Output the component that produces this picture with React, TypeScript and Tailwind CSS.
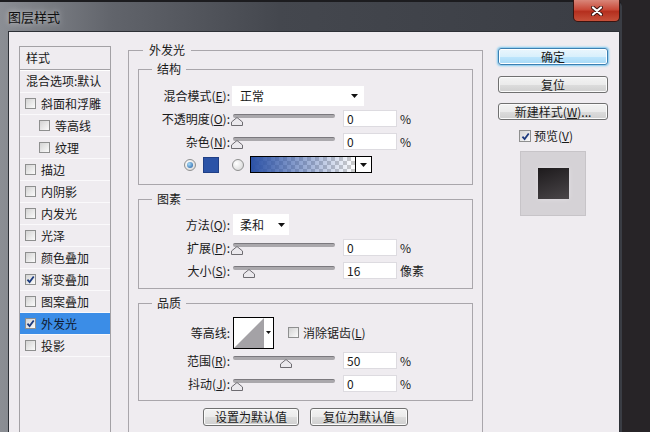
import React from "react";

function Check({ on = false, big = false }: { on?: boolean; big?: boolean }) {
  return (
    <span
      className={`${big ? "w-[12px] h-[12px]" : "w-[11px] h-[11px]"} shrink-0 border border-[#8e8f8f] bg-[linear-gradient(135deg,#d3d3d3,#fbfbfb)] flex items-center justify-center`}
    >
      {on && (
        <svg viewBox="0 0 10 10" className="w-[9px] h-[9px]">
          <path d="M1.6 5.2 L4 7.9 L8.6 1.6" fill="none" stroke="#1c3a7e" strokeWidth="2" />
        </svg>
      )}
    </span>
  );
}

function Radio({ on = false }: { on?: boolean }) {
  return (
    <span className="w-[12px] h-[12px] shrink-0 rounded-full border border-[#8e8f8f] bg-[radial-gradient(circle_at_35%_35%,#ffffff,#d2d2d2)] flex items-center justify-center">
      {on && (
        <span className="w-[6px] h-[6px] rounded-full bg-[radial-gradient(circle_at_35%_35%,#a9dcf8,#1c5aa3)]" />
      )}
    </span>
  );
}

function Arrow({ small = false }: { small?: boolean }) {
  return small ? (
    <svg width="5" height="3" viewBox="0 0 5 3">
      <path d="M0 0 H5 L2.5 3 Z" fill="#111" />
    </svg>
  ) : (
    <svg width="7" height="4" viewBox="0 0 7 4">
      <path d="M0 0 H7 L3.5 4 Z" fill="#111" />
    </svg>
  );
}

function Slider({ thumb }: { thumb: string }) {
  return (
    <div className="relative w-[102px] h-[14px] ml-[1px] shrink-0">
      <div className="mt-[2px] h-[4px] rounded-full bg-[#aaa8ac] border-t border-[#7b797e]" />
      <svg className={`absolute top-[5px] ${thumb} w-[12px] h-[9px]`} viewBox="0 0 12 9">
        <path d="M6 0.5 L11.5 5 V8.5 H0.5 V5 Z" fill="#ebe9ed" stroke="#6e6c71" />
      </svg>
    </div>
  );
}

function Field({ value }: { value: string }) {
  return (
    <div className="ml-[8px] w-[54px] h-[17px] shrink-0 bg-white border border-[#dddbe0] flex items-center pl-[3px] leading-none">
      {value}
    </div>
  );
}

function Label({ children }: { children: React.ReactNode }) {
  return <div className="w-[91px] shrink-0 text-right leading-none">{children}</div>;
}

function K({ children }: { children: React.ReactNode }) {
  return <span className="underline underline-offset-[1px]">{children}</span>;
}

function SliderRow({ label, thumb, value, unit }: { label: React.ReactNode; thumb: string; value: string; unit: string }) {
  return (
    <div className="h-[23px] flex items-center">
      <Label>{label}</Label>
      <div className="w-[2px]" />
      <Slider thumb={thumb} />
      <Field value={value} />
      <span className="ml-[3px] leading-none">{unit}</span>
    </div>
  );
}

const gray =
  "rounded-[3px] border border-[#707070] bg-[linear-gradient(#f3f3f3_0%,#ebebeb_50%,#dddddd_51%,#cfcfcf_100%)] shadow-[inset_0_0_0_1px_#fbfbfb] flex items-center justify-center leading-none";

const items = [
  { t: "斜面和浮雕" },
  { t: "等高线", indent: true },
  { t: "纹理", indent: true },
  { t: "描边" },
  { t: "内阴影" },
  { t: "内发光" },
  { t: "光泽" },
  { t: "颜色叠加" },
  { t: "渐变叠加", on: true },
  { t: "图案叠加" },
  { t: "外发光", on: true, sel: true },
  { t: "投影" },
];

export default function App() {
  return (
    <div className="w-[650px] h-[432px] overflow-hidden bg-[#272427] font-['Noto_Sans_CJK_SC','Liberation_Sans',sans-serif] text-[12px] text-[#1a1a1a]">
      <div className="w-[622px] h-full flex flex-col rounded-tr-[6px] pl-[8px] pr-[2px] bg-[linear-gradient(90deg,#8b8e94_0%,#61646b_18%,#44474e_45%,#3a3d44_100%)] border-t-[2px] border-[#1c1c1f]">
        <div className="h-[29px] flex items-start justify-between shrink-0">
          <span className="mt-[8px] text-[13px] leading-[14px] text-[#101010] [text-shadow:0_0_6px_rgba(255,255,255,0.7)]">
            图层样式
          </span>
          <div className="-mt-[2px] w-[47px] h-[22px] rounded-b-[5px] border border-t-0 border-[#3a1410] bg-[linear-gradient(#d98679_0%,#c94a39_45%,#b52f1e_55%,#c6503a_100%)] flex items-center justify-center">
            <svg width="12" height="10" viewBox="0 0 12 10">
              <path d="M2 1.5 L10 8.5 M10 1.5 L2 8.5" stroke="#3a1410" strokeWidth="4" strokeLinecap="round" />
              <path d="M2 1.5 L10 8.5 M10 1.5 L2 8.5" stroke="#ffffff" strokeWidth="2.2" strokeLinecap="round" />
            </svg>
          </div>
        </div>

        <div className="flex-1 border border-[#2d3036] bg-[#efecf0] flex items-start">
          {/* styles list */}
          <div className="ml-[10px] mt-[14px] w-[92px] self-stretch border-l border-r border-t border-[#a3a1a5]">
            <div className="h-[23px] pl-[6px] flex items-center leading-none border-b border-[#a3a1a5] shadow-[0_1px_0_#ffffff]">
              样式
            </div>
            <div className="h-[23px] pl-[6px] flex items-center leading-none border-b border-[#faf9fb]">
              混合选项:默认
            </div>
            {items.map((it) => (
              <div
                key={it.t}
                className={`h-[22px] flex items-center gap-[5px] leading-none border-b border-[#faf9fb] ${
                  it.indent ? "pl-[19px]" : "pl-[5px]"
                } ${it.sel ? "bg-[#3b8de7] text-[#0f1a30]" : ""}`}
              >
                <Check on={it.on} />
                <span>{it.t}</span>
              </div>
            ))}
          </div>

          {/* middle */}
          <fieldset className="ml-[17px] mt-[10px] w-[355px] border border-[#a9a6ab] px-[9px] pt-[3px] pb-[30px]">
            <legend className="ml-[5px] px-[6px] leading-[16px]">外发光</legend>

            <fieldset className="border border-[#a9a6ab] pt-[7px] pb-[8px]">
              <legend className="ml-[13px] px-[5px] leading-[16px]">结构</legend>
              <div className="h-[23px] flex items-center">
                <Label>
                  混合模式(<K>E</K>):
                </Label>
                <div className="w-[2px]" />
                <div className="w-[132px] h-[20px] bg-white flex items-center justify-between pl-[8px] pr-[6px] leading-none">
                  <span>正常</span>
                  <Arrow />
                </div>
              </div>
              <SliderRow
                label={<>不透明度(<K>O</K>):</>}
                thumb="left-[-2px]"
                value="0"
                unit="%"
              />
              <SliderRow label={<>杂色(<K>N</K>):</>} thumb="left-[-2px]" value="0" unit="%" />
              <div className="h-[23px] flex items-center">
                <div className="w-[91px] shrink-0 flex items-center justify-end gap-[7px] pr-[11px]">
                  <Radio on />
                  <span className="w-[16px] h-[16px] bg-[#2b53a7] border border-[#203f86]" />
                </div>
                <div className="w-[2px]" />
                <Radio />
                <div className="ml-[6px] w-[122px] h-[17px] border border-black flex bg-white">
                  <svg className="w-[104px] h-[15px]" viewBox="0 0 104 15" preserveAspectRatio="none">
                    <defs>
                      <pattern id="ck" width="8" height="8" patternUnits="userSpaceOnUse">
                        <rect width="8" height="8" fill="#ffffff" />
                        <rect width="4" height="4" fill="#cdcdcd" />
                        <rect x="4" y="4" width="4" height="4" fill="#cdcdcd" />
                      </pattern>
                      <linearGradient id="gb" x1="0" x2="1" y1="0" y2="0">
                        <stop offset="0" stopColor="#2c52a6" />
                        <stop offset="1" stopColor="#2c52a6" stopOpacity="0" />
                      </linearGradient>
                    </defs>
                    <rect width="104" height="15" fill="url(#ck)" />
                    <rect width="104" height="15" fill="url(#gb)" />
                  </svg>
                  <div className="flex-1 border-l border-black flex items-center justify-center">
                    <Arrow />
                  </div>
                </div>
              </div>
            </fieldset>

            <fieldset className="mt-[6px] border border-[#a9a6ab] pt-[6px] pb-[6px]">
              <legend className="ml-[13px] px-[5px] leading-[16px]">图素</legend>
              <div className="h-[23px] flex items-center">
                <Label>
                  方法(<K>Q</K>):
                </Label>
                <div className="w-[3px]" />
                <div className="w-[56px] h-[21px] bg-white flex items-center justify-between pl-[7px] pr-[4px] leading-none">
                  <span>柔和</span>
                  <Arrow />
                </div>
              </div>
              <SliderRow label={<>扩展(<K>P</K>):</>} thumb="left-[-2px]" value="0" unit="%" />
              <SliderRow label={<>大小(<K>S</K>):</>} thumb="left-[10px]" value="16" unit="像素" />
            </fieldset>

            <fieldset className="mt-[6px] border border-[#a9a6ab] pt-[5px] pb-[5px]">
              <legend className="ml-[13px] px-[5px] leading-[16px]">品质</legend>
              <div className="h-[33px] flex items-center">
                <Label>等高线:</Label>
                <div className="w-[3px]" />
                <div className="w-[41px] h-[32px] border border-black bg-white flex">
                  <svg className="w-[30px] h-[30px]" viewBox="0 0 30 30">
                    <path d="M0 30 L30 0 V30 Z" fill="#a4a2a6" />
                  </svg>
                  <div className="flex-1 flex items-center justify-center">
                    <Arrow small />
                  </div>
                </div>
                <div className="ml-[14px] flex items-center gap-[4px] leading-none">
                  <Check />
                  <span>
                    消除锯齿(<K>L</K>)
                  </span>
                </div>
              </div>
              <SliderRow label={<>范围(<K>R</K>):</>} thumb="left-[47px]" value="50" unit="%" />
              <SliderRow label={<>抖动(<K>J</K>):</>} thumb="left-[-2px]" value="0" unit="%" />
            </fieldset>

            <div className="mt-[7px] flex justify-center gap-[11px]">
              <div className={`w-[96px] h-[18px] ${gray}`}>设置为默认值</div>
              <div className={`w-[98px] h-[18px] ${gray}`}>复位为默认值</div>
            </div>
          </fieldset>

          {/* right column */}
          <div className="ml-[15px] mt-[16px] w-[110px] flex flex-col">
            <div className="h-[17px] rounded-[3px] border border-[#3c7fb1] bg-[linear-gradient(#eaf6fd_0%,#d9f0fc_50%,#bee6fd_51%,#a7d9f5_100%)] shadow-[0_0_2px_1px_#7cc8f0,inset_0_0_0_1px_#ffffff] flex items-center justify-center leading-none">
              确定
            </div>
            <div className={`mt-[11px] h-[17px] ${gray}`}>复位</div>
            <div className={`mt-[10px] h-[17px] ${gray}`}>
              新建样式(<K>W</K>)...
            </div>
            <div className="mt-[10px] h-[12px] pl-[21px] flex items-center gap-[3px] leading-none">
              <Check on big />
              <span>
                预览(<K>V</K>)
              </span>
            </div>
            <div className="mt-[9px] mx-auto w-[66px] h-[65px] bg-[#d5d2d6] border border-[#c7c4c8] flex items-center justify-center">
              <div className="w-[31px] h-[31px] bg-[linear-gradient(160deg,#1d1a1c,#4a4649)] shadow-[0_0_5px_rgba(255,255,255,0.35)]" />
            </div>
          </div>
        </div>
      </div>
    </div>
  );
}
